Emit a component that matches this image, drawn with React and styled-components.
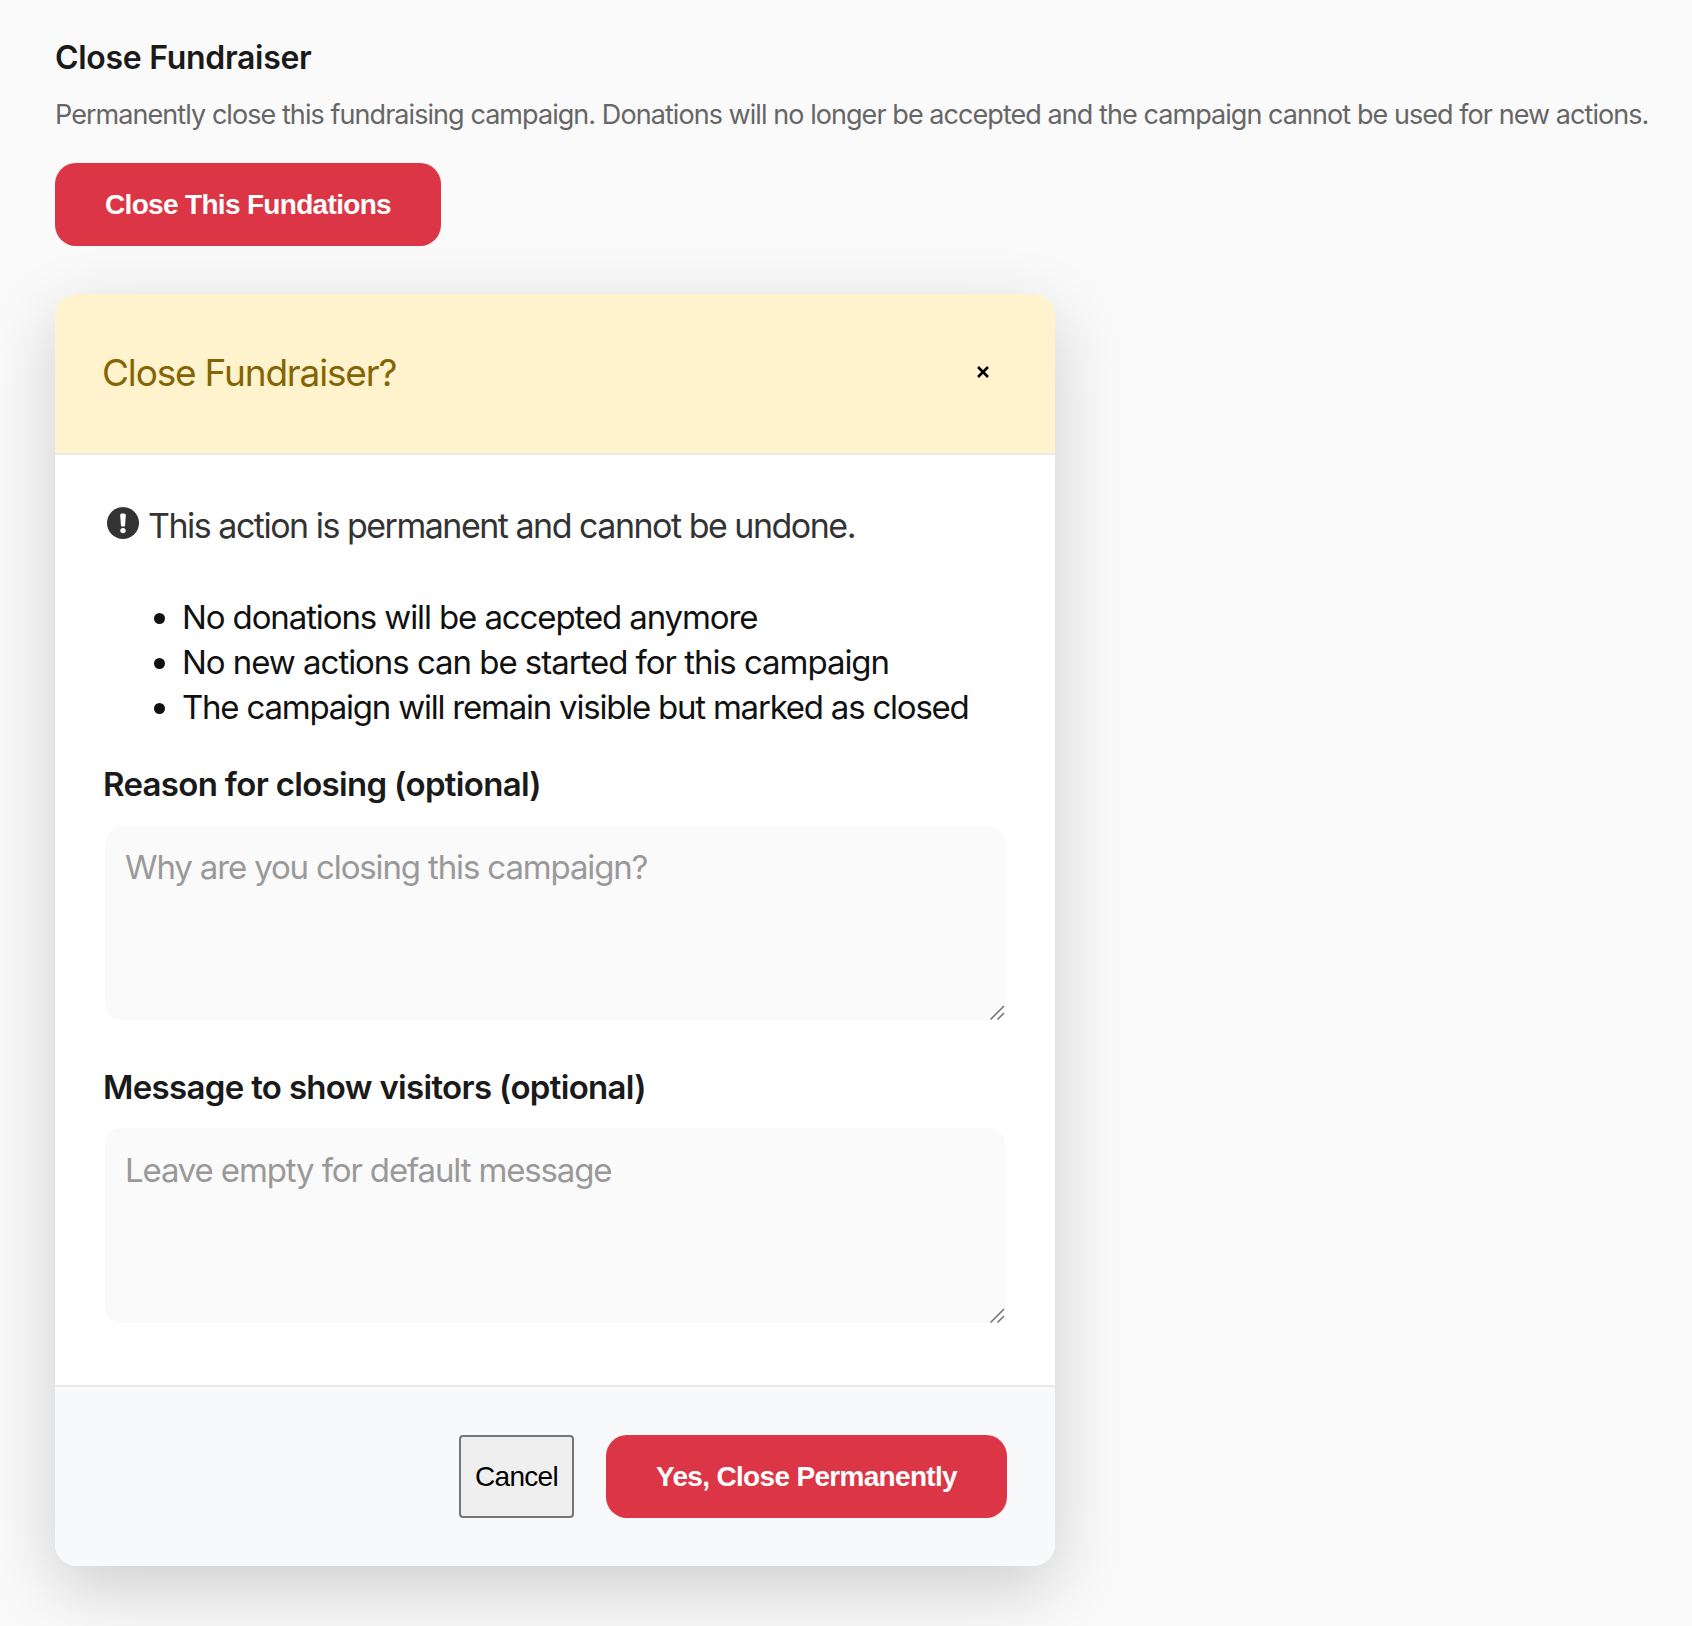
import React from "react";
import styled, { createGlobalStyle } from "styled-components";

const Global = createGlobalStyle`
  html, body { margin: 0; background: #fafafa; }
  * { box-sizing: border-box; }
`;
const resizer = encodeURIComponent(
  '<svg xmlns="http://www.w3.org/2000/svg" width="15" height="15"><path d="M0.5 14.5 14 1M7.5 14.5 14 8" stroke="#707070" stroke-width="1.5" fill="none"/></svg>'
);
const Page = styled.div`
  min-height: 1626px;
  padding: 37px 0 0 55px;
  font-family: Inter, "Noto Sans", sans-serif;
  overflow: hidden;
`;
const Title = styled.h3`
  margin: 0;
  font-size: 32px;
  line-height: 42px;
  font-weight: 600;
  color: #1a1a1a;
  letter-spacing: -0.3px;
`;
const Description = styled.p`
  margin: 15px 0 0;
  font-size: 27px;
  line-height: 42px;
  color: #666;
  letter-spacing: -0.94px;
  white-space: nowrap;
`;
const DangerButton = styled.button`
  display: block;
  height: 83px;
  width: ${(p) => p.$width}px;
  padding: 0;
  border: 0;
  border-radius: 21px;
  background: #dc3545;
  color: #fff;
  font: 700 28px "Liberation Sans", Arial, sans-serif;
  letter-spacing: -0.68px;
`;
const TopButton = styled(DangerButton)`
  margin-top: 27px;
`;
const Modal = styled.section`
  margin-top: 48px;
  width: 1000px;
  height: 1272px;
  background: #fff;
  border-radius: 22px;
  overflow: hidden;
  display: flex;
  flex-direction: column;
  box-shadow: 0 22px 70px rgba(0, 0, 0, 0.18);
`;
const Header = styled.header`
  height: 161px;
  flex: none;
  background: #fff3cd;
  border-bottom: 2px solid #e9e9e9;
  padding: 0 65px 3px 47px;
  display: flex;
  align-items: center;
  justify-content: space-between;
`;
const HeaderTitle = styled.h2`
  margin: 0;
  font-size: 37px;
  font-weight: 400;
  color: #856404;
  letter-spacing: -1.18px;
`;
const CloseIcon = styled.svg`
  width: 14px;
  height: 14px;
  display: block;
`;
const Body = styled.div`
  flex: 1;
  padding: 47px 48px 0;
  display: flex;
  flex-direction: column;
`;
const Warning = styled.p`
  margin: 0;
  padding-left: 4px;
  display: flex;
  align-items: center;
  gap: 9px;
  font-size: 34px;
  line-height: 48px;
  color: #333;
  letter-spacing: -1.5px;
`;
const WarningIcon = styled.svg`
  width: 32px;
  height: 32px;
  flex: none;
  margin-bottom: 6px;
`;
const Bullets = styled.ul`
  margin: 45px 0 0;
  padding: 0 0 0 79px;
  font-size: 33px;
  line-height: 45px;
  color: #111;
`;
const Bullet = styled.li`
  letter-spacing: ${(p) => p.$tracking}px;
`;
const Label = styled.label`
  display: block;
  margin-top: ${(p) => p.$top}px;
  font-size: 33px;
  line-height: 46px;
  font-weight: 600;
  color: #1a1a1a;
  letter-spacing: -0.68px;
`;
const Area = styled.textarea`
  display: block;
  width: 900px;
  height: ${(p) => p.$height}px;
  margin: ${(p) => p.$gap}px 0 0 2px;
  padding: ${(p) => p.$pad}px 20px 20px;
  border: 0;
  outline: 0;
  border-radius: 16px;
  background: #fafafa;
  resize: vertical;
  font-family: Inter, "Noto Sans", sans-serif;
  font-size: 33px;
  line-height: 41px;
  letter-spacing: -1.14px;
  &::placeholder { color: #999; opacity: 1; }
  &::-webkit-resizer {
    background: url("data:image/svg+xml,${resizer}") no-repeat right bottom;
  }
`;
const Footer = styled.footer`
  height: 181px;
  flex: none;
  background: #f8f9fa;
  border-top: 2px solid #e9e9e9;
  padding: 48px 48px 0 0;
  display: flex;
  justify-content: flex-end;
  gap: 32px;
`;
const CancelButton = styled.button`
  width: 115px;
  height: 83px;
  padding: 0;
  border: 2px solid #767676;
  border-radius: 4px;
  background: #efefef;
  color: #000;
  font: 400 28px "Liberation Sans", Arial, sans-serif;
  letter-spacing: -0.7px;
`;

export default function App() {
  return (
    <Page>
      <Global />
      <Title>Close Fundraiser</Title>
      <Description>
        Permanently close this fundraising campaign. Donations will no longer be accepted and the campaign cannot be used for new actions.
      </Description>
      <TopButton $width={386}>Close This Fundations</TopButton>
      <Modal>
        <Header>
          <HeaderTitle>Close Fundraiser?</HeaderTitle>
          <CloseIcon viewBox="0 0 14 14" aria-label="Close">
            <path d="M2 2 12 12M12 2 2 12" stroke="#000" strokeWidth="2.6" fill="none" />
          </CloseIcon>
        </Header>
        <Body>
          <Warning>
            <WarningIcon viewBox="0 0 32 32" aria-hidden="true">
              <circle cx="16" cy="16" r="16" fill="#333" />
              <path d="M13.2 8.2c0-1 .8-1.7 1.7-1.7h2.2c1 0 1.7.8 1.7 1.7l-.7 10c-.1.8-.7 1.3-1.4 1.3h-1.4c-.7 0-1.3-.5-1.4-1.3z" fill="#fff" />
              <circle cx="16" cy="23.6" r="2.7" fill="#fff" />
            </WarningIcon>
            This action is permanent and cannot be undone.
          </Warning>
          <Bullets>
            <Bullet $tracking={-1.11}>No donations will be accepted anymore</Bullet>
            <Bullet $tracking={-1.04}>No new actions can be started for this campaign</Bullet>
            <Bullet $tracking={-1.22}>The campaign will remain visible but marked as closed</Bullet>
          </Bullets>
          <Label $top={31}>Reason for closing (optional)</Label>
          <Area $gap={20} $height={193} $pad={20} placeholder="Why are you closing this campaign?" />
          <Label $top={44}>Message to show visitors (optional)</Label>
          <Area $gap={18} $height={195} $pad={22} placeholder="Leave empty for default message" />
        </Body>
        <Footer>
          <CancelButton>Cancel</CancelButton>
          <DangerButton $width={401}>Yes, Close Permanently</DangerButton>
        </Footer>
      </Modal>
    </Page>
  );
}
